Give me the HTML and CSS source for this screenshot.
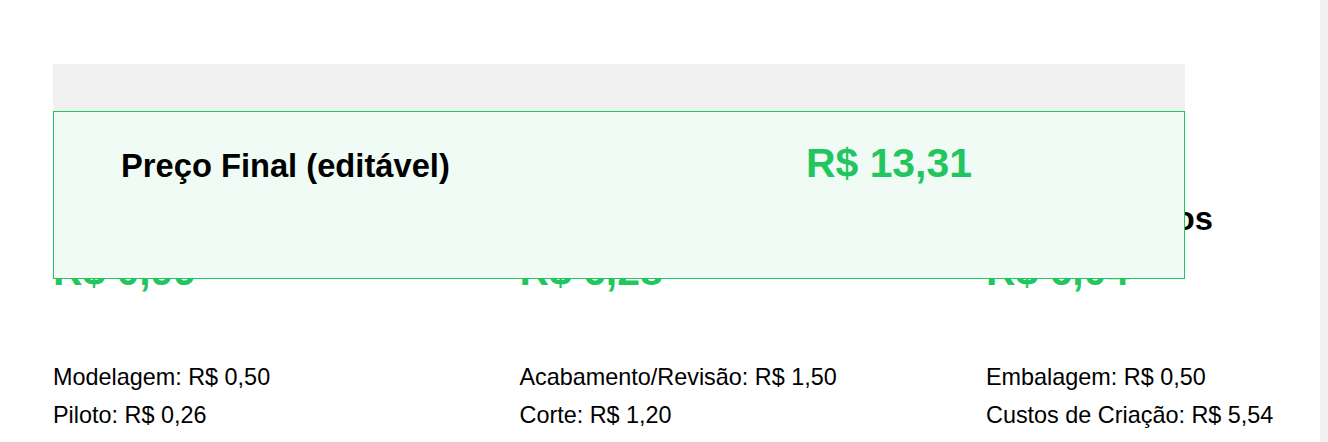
FILE: index.html
```html
<!DOCTYPE html>
<html lang="pt-BR">
<head>
<meta charset="utf-8">
<title>Preço Final</title>
<link rel="stylesheet" href="styles.css">
</head>
<body>
<div class="page">
  <main class="main">
    <section class="panel">
      <div class="panel-head"></div>
      <div class="columns">
        <div class="col">
          <h2 class="col-title">Custos Diretos</h2>
          <div class="col-total">R$ 0,99</div>
          <ul class="items">
            <li>Modelagem: R$ 0,50</li>
            <li>Piloto: R$ 0,26</li>
          </ul>
        </div>
        <div class="col">
          <h2 class="col-title">Mão de Obra</h2>
          <div class="col-total">R$ 6,28</div>
          <ul class="items">
            <li>Acabamento/Revisão: R$ 1,50</li>
            <li>Corte: R$ 1,20</li>
          </ul>
        </div>
        <div class="col">
          <h2 class="col-title">Outros Custos</h2>
          <div class="col-total">R$ 6,04</div>
          <ul class="items">
            <li>Embalagem: R$ 0,50</li>
            <li>Custos de Criação: R$ 5,54</li>
          </ul>
        </div>
      </div>
      <div class="final-box">
        <div class="final-row">
          <span class="final-label">Preço Final (editável)</span>
          <span class="final-value">R$ 13,31</span>
        </div>
      </div>
    </section>
  </main>
  <div class="side-strip"></div>
</div>
</body>
</html>
```

FILE: styles.css
```css
html, body {
  margin: 0;
  padding: 0;
  height: 100%;
  overflow: hidden;
  background: #ffffff;
}

body {
  font-family: "Liberation Sans", Arial, sans-serif;
  color: #000000;
}

.page {
  display: flex;
  height: 100vh;
}

.main {
  flex: 1;
  min-width: 0;
  padding: 64px 0 0 53px;
  overflow: hidden;
}

.side-strip {
  width: 8px;
  flex: none;
  background: #f0f0f0;
}

.panel {
  position: relative;
}

.panel-head {
  width: 1132px;
  height: 47px;
  background: #f0f0f0;
}

.columns {
  display: grid;
  grid-template-columns: repeat(3, 466.5px);
  padding-top: 89px;
}

.col-title {
  margin: 0;
  font-size: 32.7px;
  font-weight: 700;
  line-height: normal;
  white-space: nowrap;
}

.col-total {
  margin-top: 10px;
  font-size: 40.9px;
  font-weight: 700;
  color: #22c55e;
  line-height: normal;
  white-space: nowrap;
}

.items {
  list-style: none;
  margin: 69px 0 0;
  padding: 0;
  font-size: 23.4px;
  line-height: normal;
}

.items li {
  margin-bottom: 11.1px;
  white-space: nowrap;
}

.final-box {
  position: absolute;
  top: 47px;
  left: 0;
  width: 1132px;
  height: 168px;
  box-sizing: border-box;
  background: #f0fbf5;
  border: 1px solid #22c55e;
  padding: 28px 0 0 67px;
}

.final-row {
  display: grid;
  grid-template-columns: 685px auto;
  align-items: baseline;
}

.final-label {
  font-size: 32.7px;
  font-weight: 700;
  line-height: normal;
}

.final-value {
  font-size: 40.9px;
  font-weight: 700;
  color: #22c55e;
  line-height: normal;
}
```
